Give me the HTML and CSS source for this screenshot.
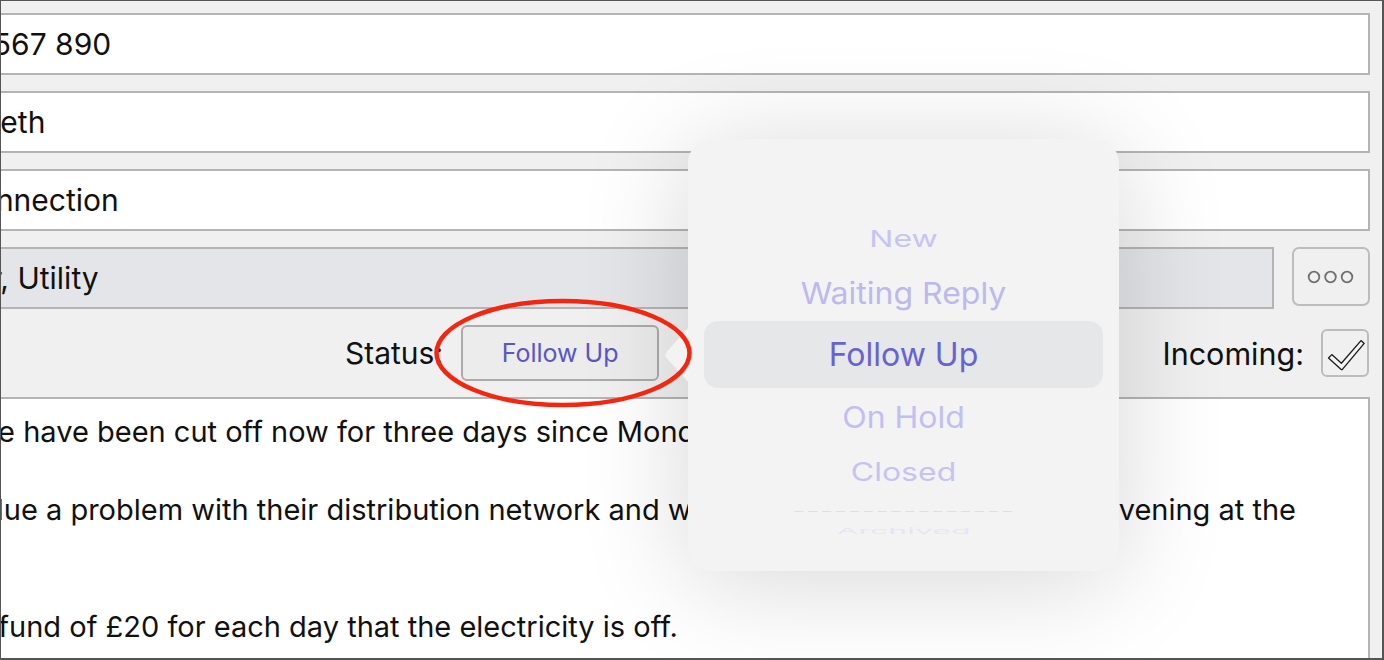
FILE: index.html
```html
<!DOCTYPE html>
<html lang="en">
<head>
<meta charset="utf-8">
<title>Ticket</title>
<link rel="stylesheet" href="styles.css">
</head>
<body>
<div class="frame">
  <div class="form">
    <div class="field"><span class="val">1234 567 890</span></div>
    <div class="field"><span class="val">Elizabeth</span></div>
    <div class="field"><span class="val">Disconnection</span></div>
    <div class="field-row">
      <div class="field field-gray"><span class="val">Power, Utility</span></div>
      <button class="more-btn" type="button" aria-label="More">
        <svg width="48" height="14" viewBox="0 0 48 14"><circle cx="7" cy="7" r="5.3"/><circle cx="23.5" cy="7" r="5.3"/><circle cx="40" cy="7" r="5.3"/></svg>
      </button>
    </div>
    <div class="status-row">
      <div class="status-group">
        <span class="label">Status:</span>
        <button class="status-btn" type="button">Follow Up</button>
      </div>
      <div class="incoming-group">
        <span class="label">Incoming:</span>
        <span class="checkbox">
          <svg width="44" height="44" viewBox="0 0 44 44"><path d="M5.5 27 L8.8 23.6 L18.4 32.2 L38 9.6 L41.2 12.4 L19.6 38.2 Q18.8 39 17.9 38.2 Z"/></svg>
        </span>
      </div>
    </div>
    <div class="textarea">
      <div class="ln">We have been cut off now for three days since Monday morning.</div>
      <div class="ln"></div>
      <div class="ln ln-split ln-due"><span>due a problem with their distribution network and will be</span><span>fixed by this evening at the</span></div>
      <div class="ln"></div>
      <div class="ln"></div>
      <div class="ln">refund of £20 for each day that the electricity is off.</div>
    </div>
  </div>

  <div class="popover">
    <svg class="arrow" width="26" height="56" viewBox="0 0 26 56"><path d="M26 0 L3.5 25 Q1 28 3.5 31 L26 56 Z"/></svg>
    <div class="wheel">
      <div class="opt o-new"><span>New</span></div>
      <div class="opt o-wait"><span>Waiting Reply</span></div>
      <div class="opt o-sel"><span>Follow Up</span></div>
      <div class="opt o-hold"><span>On Hold</span></div>
      <div class="opt o-closed"><span>Closed</span></div>
      <div class="opt o-dash"><span>----------------</span></div>
      <div class="opt o-arch"><span>Archived</span></div>
    </div>
  </div>

  <svg class="annot" width="266" height="114" viewBox="0 0 266 114"><ellipse cx="131" cy="56" rx="126.5" ry="52"/></svg>
</div>
</body>
</html>
```

FILE: styles.css
```css
html, body {
  margin: 0;
  padding: 0;
}
body {
  width: 1384px;
  height: 660px;
  overflow: hidden;
  font-family: Inter, "Noto Sans", sans-serif;
  color: #111;
}
.frame {
  position: relative;
  box-sizing: border-box;
  width: 1384px;
  height: 660px;
  border-style: solid;
  border-color: #555;
  border-width: 1px 2px 2px 1px;
  background: #f0f0f0;
  overflow: hidden;
}
.form {
  margin-left: -100px;
  padding: 12px 12px 0 0;
  display: flex;
  flex-direction: column;
  gap: 16px;
}
.field {
  box-sizing: border-box;
  height: 62px;
  border: 2px solid #b4b4b4;
  background: #fff;
  padding: 0 13px;
  display: flex;
  align-items: center;
  font-size: 30px;
  white-space: nowrap;
  overflow: hidden;
}
.field-row {
  display: flex;
  gap: 18px;
  align-items: flex-start;
}
.field-gray {
  flex: 1;
  background: #e4e5e9;
  padding-left: 10px;
}
.more-btn {
  box-sizing: border-box;
  width: 78px;
  height: 59px;
  border: 2px solid #bdbdbd;
  border-radius: 7px;
  background: #f0f0f0;
  display: flex;
  align-items: center;
  justify-content: center;
  padding: 0;
}
.more-btn circle {
  fill: none;
  stroke: #707070;
  stroke-width: 1.8;
}
.status-row {
  height: 56px;
  display: flex;
  align-items: center;
  justify-content: space-between;
}
.label {
  font-size: 30px;
  color: #111;
}
.status-group {
  margin-left: 444px;
  display: flex;
  align-items: center;
  gap: 18px;
}
.status-btn {
  box-sizing: border-box;
  width: 198px;
  height: 56px;
  border: 2px solid #ababab;
  border-radius: 6px;
  background: #ececec;
  color: #5a55c8;
  font-family: Inter, "Noto Sans", sans-serif;
  font-size: 25px;
  padding: 0;
}
.incoming-group {
  display: flex;
  align-items: center;
  gap: 17px;
  margin-right: 1px;
}
.incoming-group .label {
  font-size: 30.5px;
}
.checkbox {
  box-sizing: border-box;
  width: 48px;
  height: 48px;
  border: 2px solid #bcbcbc;
  border-radius: 6px;
  display: flex;
  align-items: center;
  justify-content: center;
}
.checkbox path {
  fill: #f4f4f4;
  stroke: #1a1a1a;
  stroke-width: 1.3;
  stroke-linejoin: round;
}
.textarea {
  box-sizing: border-box;
  height: 270px;
  background: #fff;
  border: 2px solid #b4b4b4;
  border-bottom: none;
  padding: 13px 0 0 68px;
  font-size: 29px;
  line-height: 39px;
  white-space: nowrap;
  overflow: hidden;
}
.ln {
  height: 39px;
}
.ln-due {
  margin-left: 15px;
}
.ln-split {
  display: flex;
  justify-content: space-between;
  padding-right: 72px;
}
.popover {
  position: absolute;
  left: 687px;
  top: 138px;
  width: 431px;
  height: 432px;
  border-radius: 24px;
  background: #f3f3f3;
  box-shadow: 0 10px 110px rgba(0, 0, 0, 0.16);
}
.arrow {
  position: absolute;
  left: -25px;
  top: 188px;
}
.arrow path {
  fill: #f3f3f3;
}
.wheel {
  padding-top: 72px;
  display: flex;
  flex-direction: column;
}
.opt {
  display: flex;
  align-items: center;
  justify-content: center;
  font-size: 32px;
  white-space: nowrap;
  overflow: hidden;
}
.opt span {
  display: inline-block;
}
.o-new {
  height: 54px;
  color: #c6c4f0;
}
.o-new span {
  transform: scaleY(0.72);
}
.o-wait {
  height: 56px;
  color: #bbb9ee;
}
.o-wait span {
  transform: scaleY(0.95);
}
.o-sel {
  height: 67px;
  margin: 0 16px;
  border-radius: 14px;
  background: #e6e7e9;
  color: #6862d2;
}
.o-hold {
  height: 58px;
  color: #c1bff0;
}
.o-hold span {
  transform: scaleY(0.93);
}
.o-closed {
  height: 50px;
  color: #c6c4ef;
}
.o-closed span {
  transform: scaleY(0.8);
}
.o-dash {
  height: 30px;
  color: #dddcf4;
  font-size: 28px;
}
.o-dash span {
  transform: scaleY(0.4);
  letter-spacing: 1px;
}
.o-arch {
  height: 10px;
  color: #e6e5f6;
  align-items: flex-start;
}
.o-arch span {
  transform: scaleY(0.25);
  transform-origin: top;
}
.annot {
  position: absolute;
  left: 431px;
  top: 296px;
}
.annot ellipse {
  fill: none;
  stroke: #f5260f;
  stroke-width: 4.5;
}
```
